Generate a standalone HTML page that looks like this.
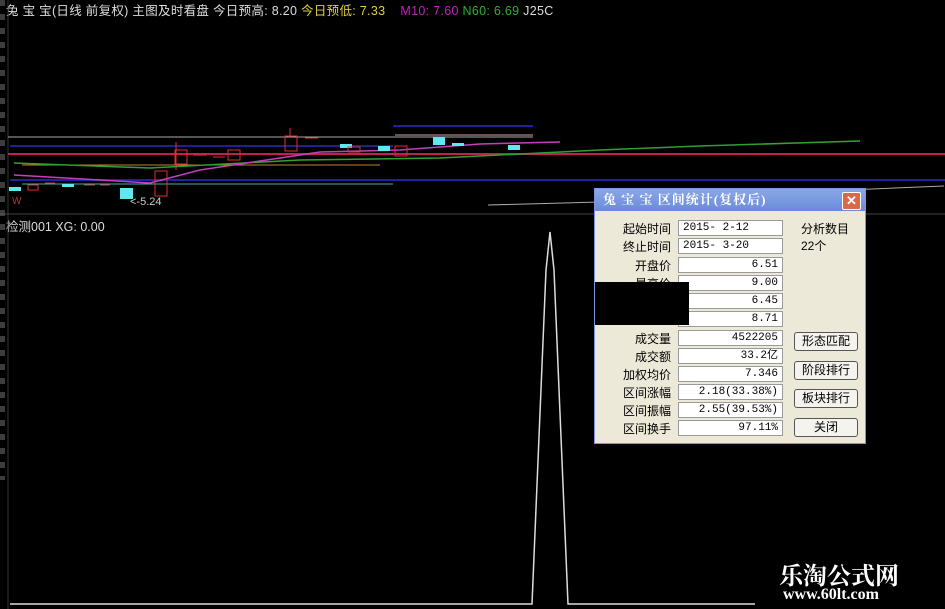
<!DOCTYPE html>
<html><head><meta charset="utf-8"><style>
body{margin:0;width:945px;height:609px;background:#000;overflow:hidden;position:relative;font-family:"Liberation Sans","Noto Sans CJK SC",sans-serif}
.t{position:absolute;white-space:nowrap;font-size:12px}
#dlg{position:absolute;left:594px;top:188px;width:272px;height:256px;background:#ece9d8;border:1px solid #7a96df;box-sizing:border-box}
#tb{position:absolute;left:0;top:0;width:270px;height:22px;background:linear-gradient(#8aa8e8,#6a8ad8);color:#fff;font-size:13px;font-weight:bold;line-height:22px;padding-left:8px;box-sizing:border-box;font-family:"Liberation Serif","Noto Serif CJK SC",serif;letter-spacing:1px}
#x{position:absolute;right:4px;top:3px;width:17px;height:16px;background:#d86a4a;border:1px solid #fff;border-radius:2px;color:#fff;font-size:13px;line-height:16px;text-align:center;letter-spacing:0}
.l{position:absolute;width:76px;text-align:right;font-size:12px;color:#000;left:0}
.i{position:absolute;left:83px;width:105px;height:16px;background:#fff;border:1px solid #9a9a9a;box-sizing:border-box;font-size:11px;text-align:right;padding-right:4px;line-height:15px;font-family:"Liberation Mono",monospace}
.b{position:absolute;left:199px;width:64px;height:19px;border:1px solid #555;border-radius:3px;background:#f4f3ee;box-sizing:border-box;font-size:12px;text-align:center;line-height:17px}
</style></head><body>
<div class="t" style="left:6px;top:0;color:#ddd;font-size:12.5px;letter-spacing:0.3px">兔 宝 宝(日线 前复权) 主图及时看盘 今日预高: 8.20 <span style="color:#e0d040">今日预低: 7.33</span>&nbsp;&nbsp;&nbsp; <span style="color:#c020c0">M10: 7.60</span> <span style="color:#30b030">N60: 6.69</span> J25C</div>
<div class="t" style="left:6px;top:216px;color:#ddd;font-size:12.5px">检测001 XG: 0.00</div>
<svg width="945" height="609" style="position:absolute;left:0;top:0">
<line x1="8" y1="0" x2="8" y2="609" stroke="#333"/>
<line x1="0" y1="214" x2="945" y2="214" stroke="#444"/>
<line x1="8" y1="137" x2="533" y2="137" stroke="#aaa"/>
<line x1="393" y1="126" x2="533" y2="126" stroke="#2020a0" stroke-width="2"/>
<line x1="8" y1="154" x2="945" y2="154" stroke="#c02050" stroke-width="2"/>
<line x1="10" y1="146" x2="393" y2="146" stroke="#202090" stroke-width="2"/>
<line x1="10" y1="180" x2="945" y2="180" stroke="#2020a0" stroke-width="2"/>
<line x1="22" y1="184" x2="393" y2="184" stroke="#40b0b0"/>
<line x1="22" y1="165" x2="380" y2="165" stroke="#c08030"/>
<polyline points="14,163 150,168 300,160 440,158 600,150 700,146 860,141" fill="none" stroke="#30a030" stroke-width="1.5"/>
<polyline points="14,175 100,180 150,183 200,170 280,158 320,152 400,150 480,144 560,142" fill="none" stroke="#c040c0" stroke-width="1.5"/>
<polyline points="488,205 600,202 700,198 800,192 944,186" fill="none" stroke="#aaa"/>
<line x1="395" y1="135" x2="533" y2="135" stroke="#e0a0a0"/>
<g fill="#60e8f0">
<rect x="9" y="187" width="12" height="4"/><rect x="62" y="184" width="12" height="3"/><rect x="120" y="188" width="13" height="11"/><rect x="340" y="144" width="12" height="4"/><rect x="378" y="146" width="12" height="5"/><rect x="433" y="137" width="12" height="8"/><rect x="452" y="143" width="12" height="3"/><rect x="508" y="145" width="12" height="5"/>
</g>
<g fill="none" stroke="#e03030">
<rect x="28" y="185" width="10" height="5"/><rect x="155" y="171" width="12" height="25"/><rect x="175" y="150" width="12" height="14"/><rect x="228" y="150" width="12" height="10"/><rect x="285" y="136" width="12" height="15"/><rect x="395" y="146" width="12" height="10"/><rect x="348" y="147" width="12" height="5"/>
<line x1="193" y1="155" x2="207" y2="155"/><line x1="213" y1="157" x2="225" y2="157"/><line x1="305" y1="138" x2="318" y2="138"/><line x1="45" y1="183" x2="55" y2="183"/><line x1="84" y1="185" x2="95" y2="185"/><line x1="100" y1="185" x2="110" y2="185"/><line x1="176" y1="142" x2="176" y2="170"/><line x1="290" y1="128" x2="290" y2="138"/>
</g>
<text x="130" y="205" fill="#ccc" font-size="11" font-family="Liberation Sans">&lt;-5.24</text>
<text x="12" y="204" fill="#c03030" font-size="10" font-family="Liberation Sans">W</text>
<polyline points="10,604 532,604 546,270 550,232 554,270 568,604 755,604" fill="none" stroke="#ddd" stroke-width="1.5"/>
</svg>
<div style="position:absolute;left:0;top:0;width:5px;height:480px;background:repeating-linear-gradient(#666 0 6px,#000 6px 14px);opacity:.6"></div>
<div id="dlg">
<div id="tb">兔 宝 宝 区间统计(复权后)<div id="x">✕</div></div>
<div class="l" style="top:31px">起始时间</div><div class="i" style="top:31px;text-align:left;padding-left:4px">2015- 2-12</div>
<div class="l" style="top:49px">终止时间</div><div class="i" style="top:49px;text-align:left;padding-left:4px">2015- 3-20</div>
<div class="l" style="top:68px">开盘价</div><div class="i" style="top:68px">6.51</div>
<div class="l" style="top:86px">最高价</div><div class="i" style="top:86px">9.00</div>
<div class="i" style="top:104px">6.45</div>
<div class="i" style="top:122px">8.71</div>
<div class="l" style="top:141px">成交量</div><div class="i" style="top:141px">4522205</div>
<div class="l" style="top:159px">成交额</div><div class="i" style="top:159px">33.2亿</div>
<div class="l" style="top:177px">加权均价</div><div class="i" style="top:177px">7.346</div>
<div class="l" style="top:195px">区间涨幅</div><div class="i" style="top:195px">2.18(33.38%)</div>
<div class="l" style="top:213px">区间振幅</div><div class="i" style="top:213px">2.55(39.53%)</div>
<div class="l" style="top:231px">区间换手</div><div class="i" style="top:231px">97.11%</div>
<div style="position:absolute;left:206px;top:31px;font-size:12px">分析数目<br>22个</div>
<div class="b" style="top:143px">形态匹配</div>
<div class="b" style="top:172px">阶段排行</div>
<div class="b" style="top:200px">板块排行</div>
<div class="b" style="top:229px">关闭</div>
</div>
<div style="position:absolute;left:595px;top:282px;width:94px;height:43px;background:#000"></div>
<div class="t" style="left:779px;top:556px;color:#fff;font-size:24px;font-weight:bold;font-family:'Noto Serif CJK SC',serif">乐淘公式网</div>
<div class="t" style="left:783px;top:586px;color:#fff;font-size:16px;font-weight:bold;font-family:'Liberation Serif',serif">www.60lt.com</div>
</body></html>
